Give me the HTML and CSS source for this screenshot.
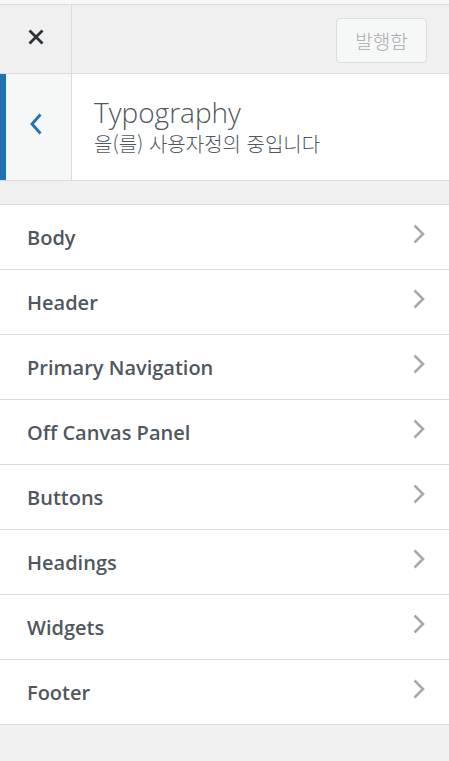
FILE: index.html
```html
<!DOCTYPE html>
<html lang="ko">
<head>
<meta charset="utf-8">
<link rel="stylesheet" href="styles.css">
</head>
<body>
<div class="top-strip"></div>
<header class="header">
  <button class="close-btn" aria-label="Close">
    <svg width="18" height="18" viewBox="0 0 18 18"><path d="M2.5 2.5 L15.5 15.5 M15.5 2.5 L2.5 15.5" stroke="#2c3338" stroke-width="2.8" fill="none"/></svg>
  </button>
  <div class="header-actions">
    <button class="publish">발행함</button>
  </div>
</header>
<section class="section-head">
  <button class="back-btn" aria-label="Back">
    <svg width="14" height="22" viewBox="0 0 14 22"><path d="M11.5 1.5 L3 11 L11.5 20.5" stroke="#2271b1" stroke-width="2.8" fill="none"/></svg>
  </button>
  <div class="titles">
    <div class="title">Typography</div>
    <div class="subtitle">을(를) 사용자정의 중입니다</div>
  </div>
</section>
<ul class="menu">
  <li class="item"><span>Body</span><svg class="chev" width="14" height="20" viewBox="0 0 14 20"><path d="M2.5 1.5 L11 10 L2.5 18.5" stroke="#a7aaad" stroke-width="2.6" fill="none"/></svg></li>
  <li class="item"><span>Header</span><svg class="chev" width="14" height="20" viewBox="0 0 14 20"><path d="M2.5 1.5 L11 10 L2.5 18.5" stroke="#a7aaad" stroke-width="2.6" fill="none"/></svg></li>
  <li class="item"><span>Primary Navigation</span><svg class="chev" width="14" height="20" viewBox="0 0 14 20"><path d="M2.5 1.5 L11 10 L2.5 18.5" stroke="#a7aaad" stroke-width="2.6" fill="none"/></svg></li>
  <li class="item"><span>Off Canvas Panel</span><svg class="chev" width="14" height="20" viewBox="0 0 14 20"><path d="M2.5 1.5 L11 10 L2.5 18.5" stroke="#a7aaad" stroke-width="2.6" fill="none"/></svg></li>
  <li class="item"><span>Buttons</span><svg class="chev" width="14" height="20" viewBox="0 0 14 20"><path d="M2.5 1.5 L11 10 L2.5 18.5" stroke="#a7aaad" stroke-width="2.6" fill="none"/></svg></li>
  <li class="item"><span>Headings</span><svg class="chev" width="14" height="20" viewBox="0 0 14 20"><path d="M2.5 1.5 L11 10 L2.5 18.5" stroke="#a7aaad" stroke-width="2.6" fill="none"/></svg></li>
  <li class="item"><span>Widgets</span><svg class="chev" width="14" height="20" viewBox="0 0 14 20"><path d="M2.5 1.5 L11 10 L2.5 18.5" stroke="#a7aaad" stroke-width="2.6" fill="none"/></svg></li>
  <li class="item"><span>Footer</span><svg class="chev" width="14" height="20" viewBox="0 0 14 20"><path d="M2.5 1.5 L11 10 L2.5 18.5" stroke="#a7aaad" stroke-width="2.6" fill="none"/></svg></li>
</ul>
</body>
</html>
```
FILE: styles.css
```css
* { box-sizing: border-box; }
html, body { margin: 0; padding: 0; }
body {
  background: #f0f0f1;
  font-family: "Open Sans", "Noto Sans CJK KR", sans-serif;
  color: #50575e;
  width: 449px;
  min-height: 761px;
}
.top-strip {
  height: 5px;
  background: #f6f7f7;
  border-bottom: 1px solid #dcdcde;
}
.header {
  display: flex;
  height: 69px;
  background: #f0f0f1;
  border-bottom: 1px solid #dcdcde;
}
.close-btn {
  width: 72px;
  height: 100%;
  border: 0;
  border-right: 1px solid #dcdcde;
  background: #f0f0f1;
  display: flex;
  align-items: center;
  justify-content: center;
  padding: 0 0 4px 0;
}
.header-actions {
  flex: 1;
  display: flex;
  align-items: center;
  justify-content: flex-end;
  padding-right: 22px;
}
.publish {
  width: 91px;
  height: 45px;
  margin-top: 3px;
  border: 1px solid #dcdcde;
  border-radius: 4px;
  background: #f6f7f7;
  color: #a7aaad;
  font-family: "Noto Sans CJK KR", sans-serif;
  font-size: 19px;
  font-weight: 300;
  padding: 0;
}
.section-head {
  display: flex;
  height: 107px;
  background: #fff;
  border-bottom: 1px solid #dcdcde;
}
.back-btn {
  width: 72px;
  height: 100%;
  border: 0;
  border-left: 6px solid #2271b1;
  border-right: 1px solid #dcdcde;
  background: #f6f7f7;
  display: flex;
  align-items: center;
  justify-content: center;
  padding: 0 6px 6px 0;
}
.titles {
  padding: 20px 0 0 22px;
}
.title {
  font-size: 28px;
  font-weight: 300;
  line-height: 36px;
  color: #50575e;
}
.subtitle {
  font-family: "Noto Sans CJK KR", sans-serif;
  font-size: 20px;
  font-weight: 300;
  line-height: 28px;
  color: #50575e;
}
.menu {
  list-style: none;
  margin: 23px 0 0;
  padding: 0;
  border-top: 1px solid #dcdcde;
}
.item {
  display: flex;
  align-items: center;
  justify-content: space-between;
  height: 65px;
  background: #fff;
  border-bottom: 1px solid #dcdcde;
  padding: 0 23px 0 27px;
  font-size: 20px;
  font-weight: 600;
  color: #50575e;
}
.chev { margin-top: -7px; }
```
